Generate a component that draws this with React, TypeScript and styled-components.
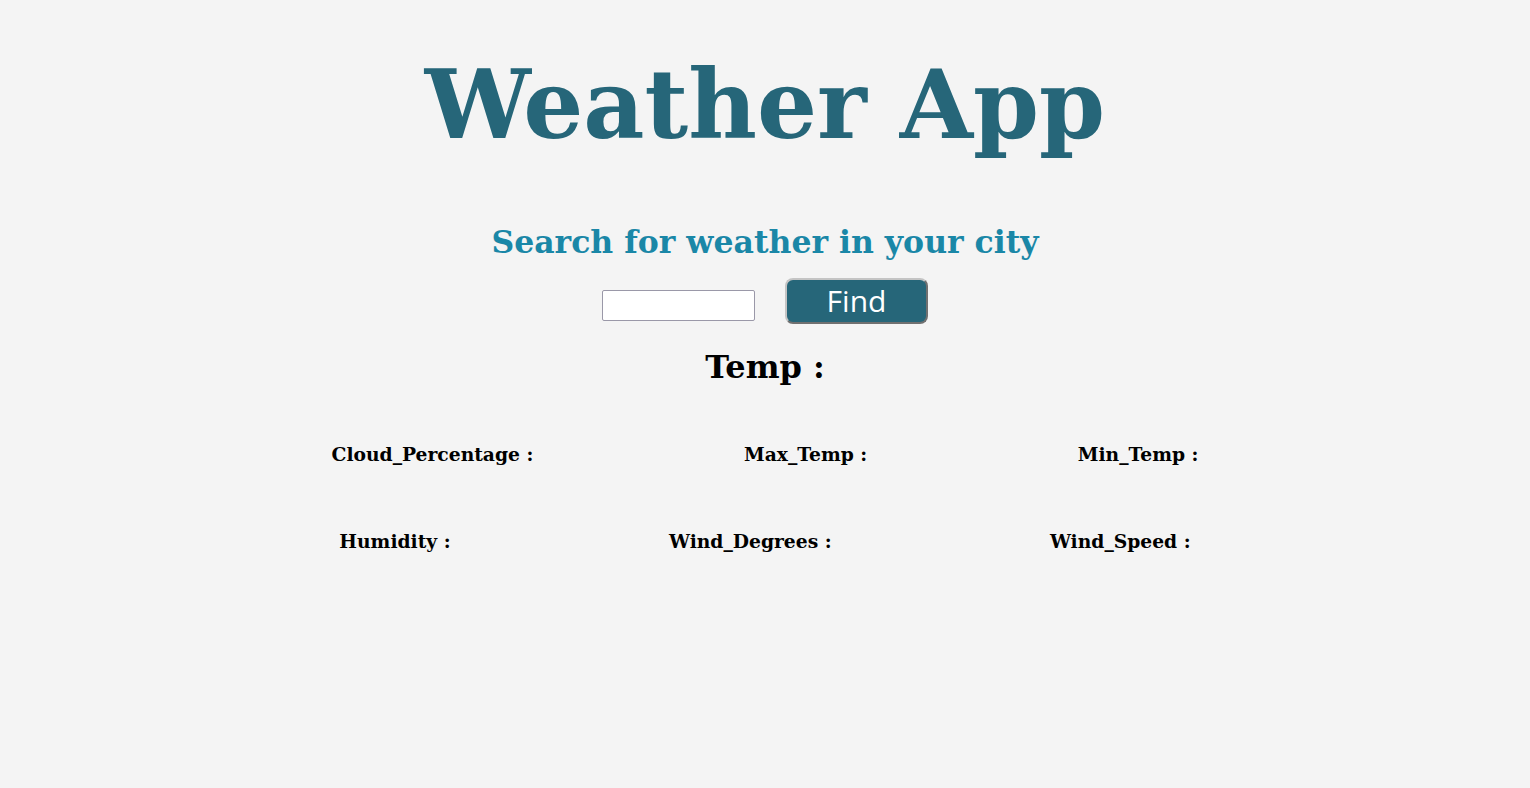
import React from "react";
import styled, { createGlobalStyle } from "styled-components";

const Global = createGlobalStyle`
  html, body { margin: 0; padding: 0; background: #f4f4f4; }
  body { font-family: "DejaVu Serif", serif; }
`;

const Page = styled.div`
  display: flex;
  flex-direction: column;
  align-items: center;
  padding: 49px 8px 0;
  min-height: 788px;
  box-sizing: border-box;
`;

const Title = styled.h1`
  margin: 0;
  font-family: "DejaVu Serif", serif;
  font-weight: bold;
  font-size: 94.5px;
  color: #266679;
`;

const Subtitle = styled.h2`
  margin: 63px 0 0;
  font-family: "DejaVu Serif", serif;
  font-weight: bold;
  font-size: 31.5px;
  color: #1a87a7;
`;

const SearchRow = styled.div`
  display: flex;
  align-items: flex-start;
  gap: 30px;
  margin-top: 18px;
`;

const CityInput = styled.input`
  margin-top: 12px;
  width: 153px;
  height: 31px;
  box-sizing: border-box;
  border: 1px solid #9a98a8;
  border-radius: 2px;
  background: #fff;
  padding: 0 4px;
`;

const FindButton = styled.button`
  width: 143px;
  height: 46px;
  box-sizing: border-box;
  background: #266679;
  color: #fff;
  border: 2px outset #c4c4c4;
  border-radius: 8px;
  font-family: "Open Sans", "Noto Sans", sans-serif;
  font-size: 30px;
  line-height: 1;
  padding: 0;
  cursor: pointer;
`;

const Temp = styled.h2`
  margin: 24px 0 0;
  font-family: "DejaVu Serif", serif;
  font-weight: bold;
  font-size: 32px;
  color: #000;
`;

const StatRow = styled.div<{ $top: number }>`
  width: 1288px;
  display: flex;
  justify-content: space-evenly;
  margin-top: ${(p) => p.$top}px;
`;

const Stat = styled.h3`
  margin: 0;
  font-family: "DejaVu Serif", serif;
  font-weight: bold;
  font-size: 18.72px;
  color: #000;
`;

export default function App() {
  return (
    <>
      <Global />
      <Page>
        <Title>Weather App</Title>
        <Subtitle>Search for weather in your city</Subtitle>
        <SearchRow>
          <CityInput type="text" />
          <FindButton>Find</FindButton>
        </SearchRow>
        <Temp>Temp :</Temp>
        <StatRow $top={57}>
          <Stat>Cloud_Percentage :</Stat>
          <Stat>Max_Temp :</Stat>
          <Stat>Min_Temp :</Stat>
        </StatRow>
        <StatRow $top={65}>
          <Stat>Humidity :</Stat>
          <Stat>Wind_Degrees :</Stat>
          <Stat>Wind_Speed :</Stat>
        </StatRow>
      </Page>
    </>
  );
}
